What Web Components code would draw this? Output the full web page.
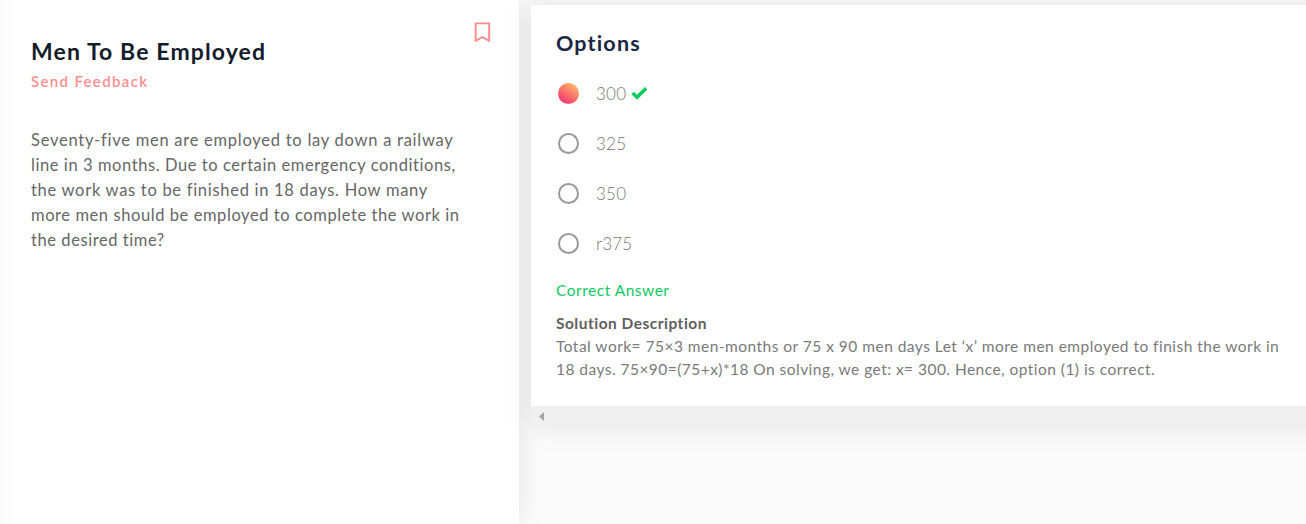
<!DOCTYPE html>
<html lang="en">
<head>
<meta charset="utf-8">
<title>Men To Be Employed</title>
<style>
html,body{margin:0;height:100%;overflow:hidden}
body{background:#fbfbfb;font-family:Lato,"Open Sans",sans-serif}
</style>
</head>
<body>
<quiz-page></quiz-page>
<script>
// One line of text whose letter spacing is adjusted to fill a measure.
class FitLine extends HTMLElement{
  connectedCallback(){
    const r=this.attachShadow({mode:'open'});
    r.innerHTML='<style>:host{display:block;white-space:nowrap}span{display:inline-block;white-space:pre}</style><span><slot></slot></span>';
    const s=r.querySelector('span'),n=this.textContent.length;
    const d=(+this.getAttribute('measure')-s.getBoundingClientRect().width)/(n-1);
    s.style.letterSpacing=d.toFixed(4)+'px';
  }
}
class BookmarkIcon extends HTMLElement{
  connectedCallback(){
    this.attachShadow({mode:'open'}).innerHTML=`<style>:host{display:block;width:17px;height:21px}svg{display:block}</style>
    <svg width="17" height="21" viewBox="0 0 17 21"><path d="M1.6 1.4H15.2V18.8L8.4 15L1.6 18.8Z" fill="none" stroke="#ff8a8a" stroke-width="1.9" stroke-linejoin="round"/></svg>`;
  }
}
class AnswerOption extends HTMLElement{
  connectedCallback(){
    const on=this.hasAttribute('selected');
    this.attachShadow({mode:'open'}).innerHTML=`<style>
    :host{display:flex;align-items:center;height:50px;font-size:17px;font-weight:300;color:#777}
    i{box-sizing:border-box;width:21px;height:21px;margin:0 17px 0 2px;border-radius:50%;border:2px solid #999}
    :host([selected]) i{border:0;background:linear-gradient(35deg,#fb2a7b 5%,#fa7069 48%,#fcc468 95%)}
    svg{display:block;margin-left:5px}
    </style><i></i><slot></slot>${on?'<svg width="17" height="14" viewBox="0 0 17 14"><path d="M1.6 7L6.1 11.3L15.1 2.3" fill="none" stroke="#00cb59" stroke-width="3.4"/></svg>':''}`;
  }
}
class QuestionPanel extends HTMLElement{
  connectedCallback(){
    this.attachShadow({mode:'open'}).innerHTML=`<style>
    :host{display:flex;justify-content:space-between;box-sizing:border-box;width:519px;height:524px;padding:0 28px 0 31px;background:linear-gradient(90deg,#fafafa,#fff 14px);box-shadow:0 0 25px rgba(0,0,0,.1)}
    h1{margin:36px 0 0;font-size:23px;line-height:30px;font-weight:700;color:#141c2c}
    .feedback{margin-top:4px;font-size:15px;line-height:22px;font-weight:600;color:#ff8a8a;opacity:.96}
    .body{margin-top:36px;font-size:16.5px;line-height:25px;color:#666}
    bookmark-icon{margin-top:22px}
    </style>
    <section>
      <h1><fit-line measure="234">Men To Be Employed</fit-line></h1>
      <div class="feedback"><fit-line measure="116">Send Feedback</fit-line></div>
      <div class="body">
        <fit-line measure="421.5">Seventy-five men are employed to lay down a railway</fit-line>
        <fit-line measure="424.5">line in 3 months. Due to certain emergency conditions,</fit-line>
        <fit-line measure="396">the work was to be finished in 18 days. How many</fit-line>
        <fit-line measure="428">more men should be employed to complete the work in</fit-line>
        <fit-line measure="133.5">the desired time?</fit-line>
      </div>
    </section>
    <bookmark-icon></bookmark-icon>`;
  }
}
class OptionsPanel extends HTMLElement{
  connectedCallback(){
    this.attachShadow({mode:'open'}).innerHTML=`<style>
    :host{display:block;margin:5px 0 0 12px;width:800px;height:422px;background:#f0f0f0;box-shadow:0 0 25px rgba(0,0,0,.1)}
    .content{box-sizing:border-box;height:401px;padding:23px 25px 0;background:#fff}
    h2{margin:0 0 10px;font-size:21.5px;line-height:30px;font-weight:700;color:#1b2544}
    .result{margin-top:11px;font-size:15.5px;line-height:23px;color:#10ca62}
    .solution{margin-top:10px;font-size:15.5px;line-height:23px;color:#7a7a7a}
    .solution b{display:block;color:#606060}
    .bar{height:21px;display:flex;align-items:center;padding:0 0 0 8px;box-sizing:border-box}
    svg{display:block}
    </style>
    <div class="content">
      <h2><fit-line measure="84">Options</fit-line></h2>
      <answer-option selected><fit-line measure="30">300</fit-line></answer-option>
      <answer-option><fit-line measure="30">325</fit-line></answer-option>
      <answer-option><fit-line measure="30">350</fit-line></answer-option>
      <answer-option><fit-line measure="36">r375</fit-line></answer-option>
      <div class="result"><fit-line measure="113">Correct Answer</fit-line></div>
      <div class="solution">
        <b><fit-line measure="151">Solution Description</fit-line></b>
        <fit-line measure="722.5">Total work= 75×3 men-months or 75 x 90 men days Let ‘x’ more men employed to finish the work in</fit-line>
        <fit-line measure="599">18 days. 75×90=(75+x)*18 On solving, we get: x= 300. Hence, option (1) is correct.</fit-line>
      </div>
    </div>
    <div class="bar"><svg width="5" height="9" viewBox="0 0 5 9"><path d="M5 0V9L0 4.5Z" fill="#a3a3a3"/></svg></div>`;
  }
}
class QuizPage extends HTMLElement{
  connectedCallback(){
    this.attachShadow({mode:'open'}).innerHTML=`<style>:host{display:flex;align-items:flex-start;width:1306px;height:524px;overflow:hidden;background:#fbfbfb}question-panel,options-panel{flex:none}</style>
    <question-panel></question-panel><options-panel></options-panel>`;
  }
}
customElements.define('quiz-page',QuizPage);
customElements.define('question-panel',QuestionPanel);
customElements.define('options-panel',OptionsPanel);
customElements.define('answer-option',AnswerOption);
customElements.define('bookmark-icon',BookmarkIcon);
customElements.define('fit-line',FitLine);
</script>
</body>
</html>
